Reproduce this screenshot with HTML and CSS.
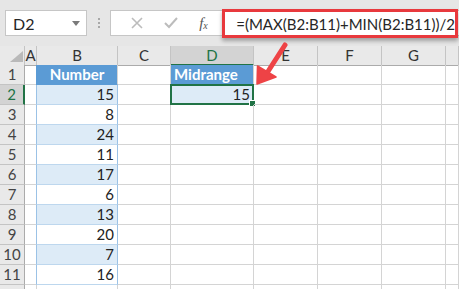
FILE: index.html
```html
<!DOCTYPE html>
<html lang="en">
<head>
  <meta charset="UTF-8" />
  <title>Midrange</title>
  <link rel="stylesheet" href="styles.css">
</head>
<body>
  <div class="window">
    <div class="toolbar">
      <div class="name-box">
        <span>D2</span>
        <svg class="caret" width="8" height="5" viewBox="0 0 8 5"><path d="M0 0h8L4 5z" fill="#7a7a7a"/></svg>
      </div>
      <div class="grip"><i></i><i></i><i></i></div>
      <div class="formula-bar">
        <div class="fx-buttons">
          <svg width="14" height="14" viewBox="0 0 14 14"><path d="M2 2l10 10M12 2L2 12" stroke="#bcbcbc" stroke-width="1.6"/></svg>
          <svg width="14" height="14" viewBox="0 0 14 14"><path d="M1 7l4 4 8-9" stroke="#bcbcbc" stroke-width="2" fill="none"/></svg>
          <span class="fx">f<sub>x</sub></span>
        </div>
        <div class="formula-input">=(MAX(B2:B11)+MIN(B2:B11))/2</div>
      </div>
    </div>

    <div class="sheet">
      <div class="row head">
        <div class="corner"><svg width="25" height="19" viewBox="0 0 25 19"><path d="M10 16h13V5z" fill="#b9b9b9"/></svg></div>
        <div>A</div><div>B</div><div>C</div><div class="sel-col">D</div><div>E</div><div>F</div><div>G</div><div></div>
      </div>
      <div class="row">
        <div class="rh">1</div><div></div><div class="tbl-head center">Number</div><div></div><div class="tbl-head">Midrange</div><div></div><div></div><div></div><div></div>
      </div>
      <div class="row">
        <div class="rh sel-row">2</div><div></div><div class="b band">15</div><div></div><div class="active">15<i class="handle"></i></div><div></div><div></div><div></div><div></div>
      </div>
      <div class="row">
        <div class="rh">3</div><div></div><div class="b">8</div><div></div><div></div><div></div><div></div><div></div><div></div>
      </div>
      <div class="row">
        <div class="rh">4</div><div></div><div class="b band">24</div><div></div><div></div><div></div><div></div><div></div><div></div>
      </div>
      <div class="row">
        <div class="rh">5</div><div></div><div class="b">11</div><div></div><div></div><div></div><div></div><div></div><div></div>
      </div>
      <div class="row">
        <div class="rh">6</div><div></div><div class="b band">17</div><div></div><div></div><div></div><div></div><div></div><div></div>
      </div>
      <div class="row">
        <div class="rh">7</div><div></div><div class="b">6</div><div></div><div></div><div></div><div></div><div></div><div></div>
      </div>
      <div class="row">
        <div class="rh">8</div><div></div><div class="b band">13</div><div></div><div></div><div></div><div></div><div></div><div></div>
      </div>
      <div class="row">
        <div class="rh">9</div><div></div><div class="b">20</div><div></div><div></div><div></div><div></div><div></div><div></div>
      </div>
      <div class="row">
        <div class="rh">10</div><div></div><div class="b band">7</div><div></div><div></div><div></div><div></div><div></div><div></div>
      </div>
      <div class="row">
        <div class="rh">11</div><div></div><div class="b">16</div><div></div><div></div><div></div><div></div><div></div><div></div>
      </div>
      <div class="row">
        <div class="rh"></div><div></div><div></div><div></div><div></div><div></div><div></div><div></div><div></div>
      </div>
    </div>

    <!-- callout arrow pointing at the result cell -->
    <svg class="arrow" width="459" height="289" viewBox="0 0 459 289">
      <path d="M285 45L267 73" stroke="#ee4346" stroke-width="5" stroke-linecap="round"/>
      <path d="M257 84L257.5 66L276 77z" fill="#ee4346" stroke="#ee4346" stroke-width="1.5" stroke-linejoin="round"/>
    </svg>
  </div>
</body>
</html>
```

FILE: styles.css
```css
body {
  margin: 0;
  background: #fff;
  font-family: 'Lato', 'Liberation Sans', sans-serif;
}

.window {
  position: relative;
  width: 459px;
  height: 289px;
  overflow: hidden;
}

.toolbar {
  height: 46px;
  box-sizing: border-box;
  padding: 10px 0 0 5px;
  background: #e6e6e6;
  display: flex;
  align-items: flex-start;
}

.name-box {
  width: 102px;
  height: 26px;
  box-sizing: border-box;
  border: 1px solid #c6c6c6;
  background: #fff;
  display: flex;
  align-items: center;
  justify-content: space-between;
  padding: 0 6px 0 7px;
  font-size: 16px;
  color: #262626;
}

.grip {
  width: 30px;
  height: 26px;
  display: flex;
  flex-direction: column;
  align-items: center;
  justify-content: center;
  gap: 2px;
}

.grip i {
  width: 2px;
  height: 2px;
  background: #a8a8a8;
}

.formula-bar {
  flex: 1;
  height: 26px;
  box-sizing: border-box;
  border: 1px solid #c6c6c6;
  border-right: none;
  background: #fff;
  display: flex;
}

.fx-buttons {
  width: 111px;
  display: flex;
  align-items: center;
  justify-content: space-around;
  padding: 0 4px 0 8px;
  box-sizing: border-box;
}

.fx {
  font-family: 'Liberation Serif', serif;
  font-style: italic;
  font-size: 15px;
  color: #555;
}

.fx sub {
  font-size: 10px;
  vertical-align: -1px;
}

.formula-input {
  flex: 1;
  margin: -2px 1px -3px 0;
  border: 3px solid #e8393d;
  background: #fff;
  box-shadow: 0 3px 4px rgba(0, 0, 0, 0.3);
  display: flex;
  align-items: center;
  padding-left: 11px;
  font-size: 15px;
  color: #262626;
  white-space: nowrap;
}

.row {
  display: grid;
  grid-template-columns: 25px 12px 81px 53px 83px 64px 64px 64px 13px;
  height: 20px;
  font-size: 15px;
  color: #222;
}

.row > div {
  box-sizing: border-box;
  border-right: 1px solid #d4d4d4;
  border-bottom: 1px solid #d4d4d4;
  line-height: 19px;
  text-align: right;
  padding-right: 3px;
  position: relative;
}

.row.head {
  height: 19px;
}

.row.head > div {
  background: #e9e9e9;
  border-right-color: #c4c4c4;
  border-bottom-color: #ababab;
  text-align: center;
  padding: 0;
  line-height: 18px;
  color: #333;
}

.row.head > .corner {
  line-height: 0;
}

.row.head > .sel-col {
  background: #d3d3d3;
  border-bottom: 2px solid #217346;
  color: #217346;
}

.row > .rh {
  background: #e9e9e9;
  border-right-color: #ababab;
  border-bottom-color: #c4c4c4;
  text-align: center;
  padding: 0;
  color: #444;
}

.row > .rh.sel-row {
  background: #d3d3d3;
  border-right: 2px solid #217346;
  color: #217346;
}

.row > .b {
  border-left: 1px solid #9bc2e6;
  border-right: 1px solid #9bc2e6;
  border-bottom-color: #bdd7ee;
  margin-left: -1px;
}

.row > .band {
  background: #ddebf7;
}

.row > .tbl-head {
  background: #5b9bd5;
  color: #fff;
  font-weight: bold;
  text-align: left;
  padding-left: 3px;
  border-bottom-color: #5b9bd5;
}

.row > .tbl-head.center {
  text-align: center;
  border-left: 1px solid #5b9bd5;
  margin-left: -1px;
}

.row > .active {
  background: #ddebf7;
  border: 2px solid #217346;
  margin: -1px 0 0 -1px;
  line-height: 17px;
  padding-right: 2px;
}

.handle {
  position: absolute;
  right: -4px;
  bottom: -4px;
  width: 5px;
  height: 5px;
  background: #217346;
  border: 1px solid #fff;
}

.arrow {
  position: absolute;
  left: 0;
  top: 0;
  pointer-events: none;
}
```
